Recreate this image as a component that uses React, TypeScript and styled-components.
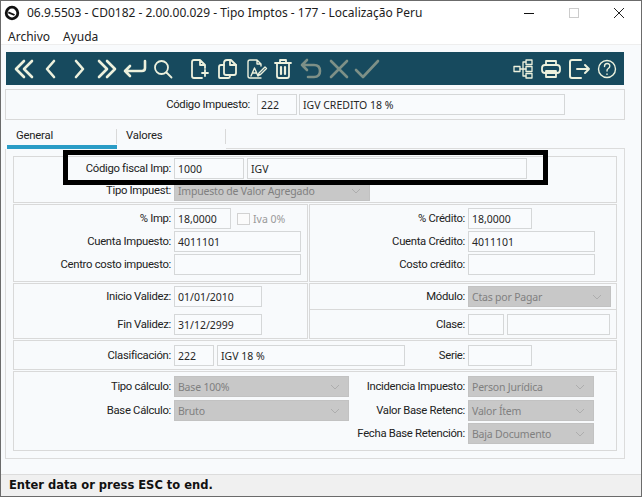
import React from "react";
import styled, { createGlobalStyle } from "styled-components";

const Global = createGlobalStyle`
  html, body { margin: 0; padding: 0; background: #fff; }
  * { box-sizing: border-box; }
`;

const UI = `"Noto Sans", "Open Sans", sans-serif`;
const LABEL = `Roboto, "Noto Sans", sans-serif`;
const FIELD = `"Noto Sans", "DejaVu Sans", sans-serif`;

const Win = styled.div`
  position: relative; width: 642px; height: 497px; border: 1px solid #6b6b6b;
  background: #fff; display: flex; flex-direction: column; overflow: hidden;
  font-family: ${UI}; font-size: 11.5px; color: #222;
`;
const TitleBar = styled.div`display: flex; align-items: center; height: 24px; padding-left: 3px; flex: none;`;
const TitleText = styled.div`margin: -2px 0 0 7px; font-size: 12px; color: #1c1c1c; flex: 1; white-space: nowrap;`;
const WinBtn = styled.div`width: 45px; height: 24px; display: flex; align-items: center; justify-content: center;`;
const MenuBar = styled.div`display: flex; gap: 13px; height: 19px; align-items: center; padding: 3px 0 0 7px; flex: none; font-size: 12px;`;
const Body = styled.div`height: 430px; background: #f8fafc; border-top: 1px solid #eeeeee; flex: none; display: flex; flex-direction: column;`;
const Toolbar = styled.div`
  margin: 7px 0 0 5px; width: 618px; height: 33px; background: #174a5e; display: flex;
  align-items: center; padding: 0 3px; flex: none;
`;
const ToolGroup = styled.div`display: flex; margin-right: ${(p: { $mr?: string }) => p.$mr || "8px"};`;
const ToolBtn = styled.div<{ $off?: boolean }>`
  width: 28px; height: 33px; display: flex; align-items: center; justify-content: center;
  color: ${(p) => (p.$off ? "#7d9087" : "#edf1dd")};
`;
const Header = styled.div`
  margin: 4px 0 0 4px; width: 620px; height: 31px; border: 1px solid #d9d9d9; display: flex;
  align-items: center; padding-left: 150px; gap: 2px; flex: none;
`;
const Tabs = styled.div`display: flex; height: 29px; margin-left: 6px; width: 618px; flex: none;`;
const Tab = styled.div<{ $active?: boolean }>`
  position: relative; width: ${(p) => (p.$active ? "110px" : "109px")}; padding: 9px 0 0 9px;
  font-family: ${LABEL}; font-size: 11.3px; letter-spacing: -0.2px;
  border-bottom: ${(p) => (p.$active ? "4px solid #2a9cc6" : "1px solid #f8fafc")};
  &::after { content: ""; position: absolute; right: 0; top: 9px; height: 15px; width: 1px; background: #d9d9d9; }
`;
const TabRest = styled.div`flex: 1; border-bottom: 1px solid #dcdcdc;`;
const Outer = styled.div`
  margin-left: 4px; width: 620px; height: 310px; border: 1px solid #dcdcdc; border-top: none;
  padding: 7px 7px 0 7px; display: flex; flex-direction: column; gap: 1px; flex: none;
`;
const Box = styled.div<{ $h: number; $pad?: number }>`
  height: ${(p) => p.$h}px; border: 1px solid #d9d9d9; padding-top: ${(p) => p.$pad ?? 0}px;
  display: flex; flex-direction: column; flex: none;
`;
const Split = styled.div`display: flex; gap: 1px; flex: none;`;
const HalfBox = styled(Box)<{ $w: number }>`width: ${(p) => p.$w}px;`;
const Stack = styled.div<{ $gap: number }>`display: flex; flex-direction: column; gap: ${(p) => p.$gap}px;`;
const Row = styled.div`display: flex; align-items: center; gap: 3px; height: 21px; flex: none;`;
const Label = styled.div<{ $w: number }>`
  width: ${(p) => p.$w}px; text-align: right; white-space: nowrap; flex: none;
  font-family: ${LABEL}; font-size: 11.3px; letter-spacing: -0.3px; color: #222; margin-top: -1px;
`;
const HeaderLabel = styled(Label)`padding-right: 5px; margin-top: 0;`;
const Input = styled.div<{ $w: number }>`
  width: ${(p) => p.$w}px; height: 21px; border: 1px solid #d5d7d8; background: #f9fbfd; padding-left: 3px;
  font-family: ${FIELD}; font-size: 10.5px; line-height: 20px; white-space: nowrap; color: #262626; flex: none;
`;
const Select = styled.div<{ $w: number }>`
  width: ${(p) => p.$w}px; height: 21px; border: 1px solid #c2c2c2; background: #c8c8c8; padding: 0 8px 0 3px;
  font-family: ${FIELD}; font-size: 10.5px; letter-spacing: -0.2px; color: #808080; display: flex; align-items: center;
  justify-content: space-between; white-space: nowrap; flex: none;
`;
const Check = styled.div`width: 13px; height: 12px; border: 1px solid #d2d2d2; background: #fbfbfb; margin-left: 3px; flex: none;`;
const CheckText = styled.div`font-family: ${FIELD}; font-size: 10.5px; color: #999;`;
const Cell = styled.div<{ $h: number; $pad: number; $line?: boolean }>`
  height: ${(p) => p.$h}px; padding-top: ${(p) => p.$pad}px;
  border-bottom: ${(p) => (p.$line ? "1px solid #d9d9d9" : "none")};
`;
const CalcGrid = styled.div`
  display: grid; grid-template-columns: 296px 1fr; grid-template-rows: 24px 23px 21px;
  padding-top: 4px; align-items: start;
`;
const Status = styled.div`
  height: 22px; flex: none; background: #f0f0f0; border-top: 1px solid #dcdcdc; display: flex; align-items: center;
  padding: 0 0 1px 8px; font-family: "DejaVu Sans", sans-serif; font-weight: 700; font-size: 11.5px; color: #111;
`;
const Highlight = styled.div`
  position: absolute; left: 62px; top: 149px; width: 485px; height: 35px; border: 5px solid #000; pointer-events: none;
`;

const Ico = ({ children, w = 2 }: { children: React.ReactNode; w?: number }) => (
  <svg width="28" height="28" viewBox="0 0 28 28" fill="none" stroke="currentColor" strokeWidth={w} strokeLinecap="round" strokeLinejoin="round">
    {children}
  </svg>
);

const Chevron = () => (
  <svg width="10" height="6" viewBox="0 0 10 6" fill="none" stroke="#adadad" strokeWidth="1"><path d="M1 1l4 4 4-4" /></svg>
);

const Sel = ({ w, children }: { w: number; children: string }) => (
  <Select $w={w}><span>{children}</span><Chevron /></Select>
);

export default function App() {
  return (
    <>
      <Global />
      <Win>
        <TitleBar>
          <svg width="16" height="16" viewBox="0 0 16 16">
            <circle cx="8" cy="8" r="5.8" fill="#fff" stroke="#111" strokeWidth="2.8" />
            <path d="M4.6 6.4l6.4 2.8-1 1.6-6-2.6z" fill="#111" />
          </svg>
          <TitleText>06.9.5503 - CD0182 - 2.00.00.029 - Tipo Imptos - 177 - Localização Peru</TitleText>
          <WinBtn><svg width="12" height="12" viewBox="0 0 12 12"><path d="M1 6.5h10" stroke="#111" /></svg></WinBtn>
          <WinBtn><svg width="12" height="12" viewBox="0 0 12 12"><rect x="1.5" y="1.5" width="9" height="9" fill="none" stroke="#cccccc" /></svg></WinBtn>
          <WinBtn><svg width="12" height="12" viewBox="0 0 12 12"><path d="M1 1l10 10M11 1L1 11" stroke="#222" /></svg></WinBtn>
        </TitleBar>
        <MenuBar><span>Archivo</span><span>Ayuda</span></MenuBar>
        <Body>
          <Toolbar>
            <ToolGroup>
              <ToolBtn><Ico w={2.6}><path d="M15 6l-8 8 8 8M23 6l-8 8 8 8" /></Ico></ToolBtn>
              <ToolBtn><Ico w={2.6}><path d="M17 6l-7 8 7 8" /></Ico></ToolBtn>
              <ToolBtn><Ico w={2.6}><path d="M11 6l7 8-7 8" /></Ico></ToolBtn>
              <ToolBtn><Ico w={2.6}><path d="M6 6l8 8-8 8M14 6l8 8-8 8" /></Ico></ToolBtn>
              <ToolBtn><Ico w={2.6}><path d="M24 6v7q0 3-3 3H4M9 11l-5 5 5 5" /></Ico></ToolBtn>
              <ToolBtn><Ico w={1.8}><circle cx="12.5" cy="12.5" r="6.5" /><path d="M17.5 17.5l5 5" /></Ico></ToolBtn>
            </ToolGroup>
            <ToolGroup $mr="auto">
              <ToolBtn><Ico w={1.8}><path d="M15 5H9q-2 0-2 2v14q0 2 2 2h8M15 5l5 5v3M15 5v5h5M17 18h6M20 15v6" /></Ico></ToolBtn>
              <ToolBtn><Ico w={1.8}><path d="M11 10H8q-2 0-2 2v10q0 1 1 1h8q2 0 2-2v-1" /><path d="M11 8q0-3 3-3h4l5 5v8q0 2-2 2h-8q-2 0-2-2z" /><path d="M17 5v5h6" /></Ico></ToolBtn>
              <ToolBtn><Ico w={1.4}><path d="M16 5H9q-2 0-2 2v14q0 2 2 2h11M16 5l4 4v2M16 5v4h4" /><path d="M10 21l3.5-8 3.5 8M11.5 18h4" /><path d="M18 18l6-6 1.5 1.5-6 6-2.5 1z" /></Ico></ToolBtn>
              <ToolBtn><Ico w={1.8}><path d="M6 8h16M11 8V5h6v3M8 8v13q0 2 2 2h8q2 0 2-2V8" /><path d="M12 12v7M16 12v7" strokeWidth={2.2} /></Ico></ToolBtn>
              <ToolBtn $off><Ico w={2.6}><path d="M10 5L5 10l5 5M5 10h12q6 0 6 6t-6 6h-6" /></Ico></ToolBtn>
              <ToolBtn $off><Ico w={2.6}><path d="M6 6l16 16M22 6L6 22" /></Ico></ToolBtn>
              <ToolBtn $off><Ico w={2.6}><path d="M3 15l7 7L25 6" /></Ico></ToolBtn>
            </ToolGroup>
            <ToolGroup $mr="0">
              <ToolBtn><Ico w={1.3}><rect x="5" y="11.5" width="6" height="5" /><rect x="17" y="5" width="6" height="4.5" /><rect x="17" y="11.5" width="6" height="5" /><rect x="17" y="18.5" width="6" height="4.5" /><path d="M11 14h6M14 7v14M14 7h3M14 21h3" /></Ico></ToolBtn>
              <ToolBtn><Ico w={1.8}><path d="M9 10V6h10v4" /><rect x="5" y="10" width="18" height="8" rx="3" /><path d="M9 16v6h10v-6z" /></Ico></ToolBtn>
              <ToolBtn><Ico w={2}><path d="M16 5H7q-2 0-2 2v14q0 2 2 2h9" /><path d="M12 14h12M20 10l4 4-4 4" /></Ico></ToolBtn>
              <ToolBtn><Ico w={1.4}><circle cx="14" cy="14" r="8.5" /><path d="M11.5 11.5q0-3 2.7-3t2.6 2.6q0 1.5-1.5 2.4t-1.3 2.5" /><path d="M14 19v.4" /></Ico></ToolBtn>
            </ToolGroup>
          </Toolbar>
          <Header>
            <HeaderLabel $w={99}>Código Impuesto:</HeaderLabel>
            <Input $w={40}>222</Input>
            <Input $w={266}>IGV CREDITO 18 %</Input>
          </Header>
          <Tabs>
            <Tab $active>General</Tab>
            <Tab>Valores</Tab>
            <TabRest />
          </Tabs>
          <Outer>
            <Box $h={47} $pad={1}>
              <Stack $gap={1}>
                <Row>
                  <Label $w={157}>Código fiscal Imp:</Label>
                  <Input $w={70}>1000</Input>
                  <Input $w={280}>IGV</Input>
                </Row>
                <Row>
                  <Label $w={157}>Tipo Impuest:</Label>
                  <Sel w={196}>Impuesto de Valor Agregado</Sel>
                </Row>
              </Stack>
            </Box>
            <Split>
              <HalfBox $w={295} $h={78} $pad={3}>
                <Stack $gap={2}>
                  <Row>
                    <Label $w={157}>% Imp:</Label>
                    <Input $w={57}>18,0000</Input>
                    <Check />
                    <CheckText>Iva 0%</CheckText>
                  </Row>
                  <Row><Label $w={157}>Cuenta Impuesto:</Label><Input $w={127}>4011101</Input></Row>
                  <Row><Label $w={157}>Centro costo impuesto:</Label><Input $w={127} /></Row>
                </Stack>
              </HalfBox>
              <HalfBox $w={308} $h={78} $pad={3}>
                <Stack $gap={2}>
                  <Row><Label $w={155}>% Crédito:</Label><Input $w={64}>18,0000</Input></Row>
                  <Row><Label $w={155}>Cuenta Crédito:</Label><Input $w={127}>4011101</Input></Row>
                  <Row><Label $w={155}>Costo crédito:</Label><Input $w={127} /></Row>
                </Stack>
              </HalfBox>
            </Split>
            <Split>
              <HalfBox $w={295} $h={56} $pad={2}>
                <Stack $gap={7}>
                  <Row><Label $w={157}>Inicio Validez:</Label><Input $w={88}>01/01/2010</Input></Row>
                  <Row><Label $w={157}>Fin Validez:</Label><Input $w={88}>31/12/2999</Input></Row>
                </Stack>
              </HalfBox>
              <HalfBox $w={308} $h={56}>
                <Cell $h={26} $pad={2} $line>
                  <Row><Label $w={155}>Módulo:</Label><Sel w={143}>Ctas por Pagar</Sel></Row>
                </Cell>
                <Cell $h={28} $pad={4}>
                  <Row><Label $w={155}>Clase:</Label><Input $w={36} /><Input $w={103} /></Row>
                </Cell>
              </HalfBox>
            </Split>
            <Box $h={30} $pad={4}>
              <Row>
                <Label $w={157}>Clasificación:</Label>
                <Input $w={40}>222</Input>
                <Input $w={188}>IGV 18 %</Input>
                <Label $w={57}>Serie:</Label>
                <Input $w={64} />
              </Row>
            </Box>
            <Box $h={80}>
              <CalcGrid>
                <Row><Label $w={157}>Tipo cálculo:</Label><Sel w={175}>Base 100%</Sel></Row>
                <Row><Label $w={155}>Incidencia Impuesto:</Label><Sel w={126}>Person Jurídica</Sel></Row>
                <Row><Label $w={157}>Base Cálculo:</Label><Sel w={175}>Bruto</Sel></Row>
                <Row><Label $w={155}>Valor Base Retenc:</Label><Sel w={126}>Valor Ítem</Sel></Row>
                <span />
                <Row><Label $w={155}>Fecha Base Retención:</Label><Sel w={126}>Baja Documento</Sel></Row>
              </CalcGrid>
            </Box>
          </Outer>
        </Body>
        <Status>Enter data or press ESC to end.</Status>
        <Highlight />
      </Win>
    </>
  );
}
